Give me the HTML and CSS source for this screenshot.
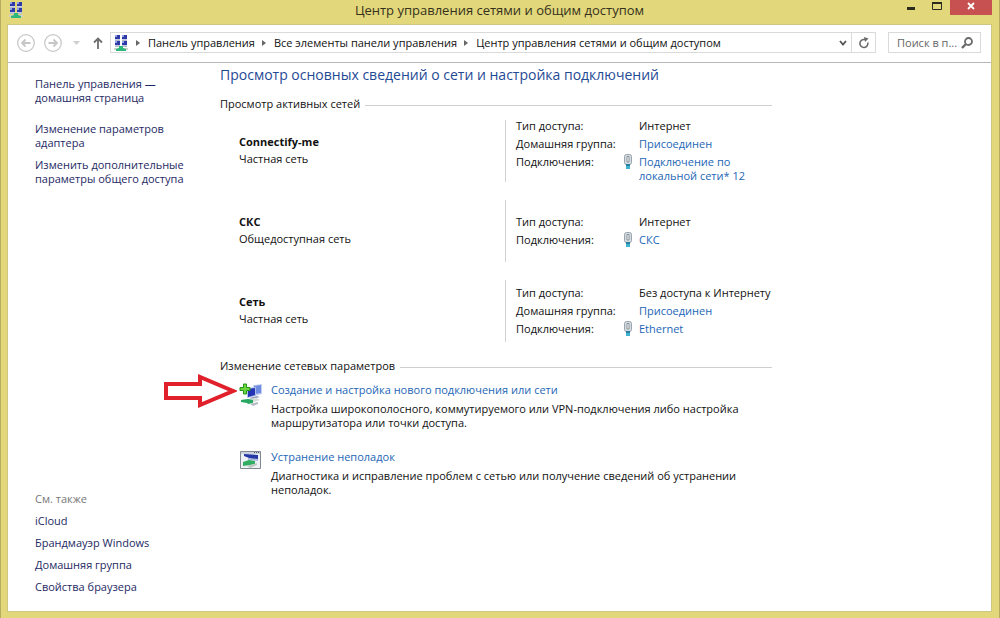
FILE: index.html
```
<!DOCTYPE html>
<html lang="ru">
<head>
    <meta charset="UTF-8">
    <meta name="viewport" content="width=device-width, initial-scale=1.0">
    <title>Центр управления сетями и общим доступом</title>
    <link rel="stylesheet" href="styles.css">
</head>
<body>
    <!-- shared icons -->
    <svg class="sprite" aria-hidden="true">
        <symbol id="icon-network" viewBox="0 0 16 16">
            <path d="M2 4h5v2H2zM9 4h5v2H9zM2 10h5v2H2zM9 10h5v2H9z" fill="#b3bccb"/>
            <path d="M2 0h5v5H2zM9 0h5v5H9zM2 6h5v5H2zM9 6h5v5H9z" fill="#c5cde4"/>
            <path d="M2 0h5v4H2zM9 0h5v4H9zM2 6h5v4H2zM9 6h5v4H9z" fill="#3039a8"/>
            <path d="M2 0h2v2H2zM9 0h2v2H9zM2 6h2v2H2zM9 6h2v2H9z" fill="#93a2e0"/>
            <path d="M1 13h14v2H1z" fill="#cdd3cf"/>
            <path d="M6 11h4v2l3 1v2H3v-2l3-1z" fill="#2db77a"/>
        </symbol>
        <symbol id="icon-plug" viewBox="0 0 10 16">
            <path d="M1.500 2.500q0-2 2-2h3q2 0 2 2v6q0 2-2 2h-3q-2 0-2-2z" fill="#d5dce2" stroke="#9aa4ac"/>
            <path d="M4 2.500h2v5.500H4z" fill="#fff" stroke="#86919a"/>
            <path d="M3 10h4v3H3z" fill="#27809f"/>
            <path d="M3 12h4v3H3z" fill="#3fb2cf"/>
        </symbol>
    </svg>

    <div class="window">
        <header class="titlebar">
            <svg class="titlebar-icon" width="16" height="16"><use href="#icon-network"/></svg>
            <h1 class="titlebar-text">Центр управления сетями и общим доступом</h1>
            <div class="window-buttons">
                <button class="win-btn" aria-label="Свернуть">
                    <svg width="12" height="12" viewBox="0 0 12 12"><path d="M2 7h8v3H2z" fill="#2b2a1c"/></svg>
                </button>
                <button class="win-btn" aria-label="Развернуть">
                    <svg width="12" height="12" viewBox="0 0 12 12"><path d="M1.500 2.500h9v7h-9z" fill="none" stroke="#2b2a1c"/><path d="M1 2h10v2H1z" fill="#2b2a1c"/></svg>
                </button>
                <button class="win-btn win-close" aria-label="Закрыть">
                    <svg width="12" height="12" viewBox="0 0 12 12"><path d="M3 3l6 6M9 3l-6 6" stroke="#fff" stroke-width="1.800"/></svg>
                </button>
            </div>
        </header>

        <div class="client">
            <nav class="toolbar">
                <button class="nav-btn nav-back" aria-label="Назад">
                    <svg width="18" height="18" viewBox="0 0 18 18" fill="none" stroke="#c6c6c6"><circle cx="9" cy="9" r="8.300" stroke-width="1.200"/><path d="M13.500 9H5M8.500 5.500L5 9l3.500 3.500" stroke-width="1.800"/></svg>
                </button>
                <button class="nav-btn nav-forward" aria-label="Вперёд">
                    <svg width="18" height="18" viewBox="0 0 18 18" fill="none" stroke="#c6c6c6"><circle cx="9" cy="9" r="8.300" stroke-width="1.200"/><path d="M4.500 9H13M9.500 5.500L13 9l-3.500 3.500" stroke-width="1.800"/></svg>
                </button>
                <button class="nav-btn nav-history" aria-label="Последние страницы">
                    <svg width="8" height="4" viewBox="0 0 8 4"><path d="M0 0h7L3.500 4z" fill="#cfcfcf"/></svg>
                </button>
                <button class="nav-btn nav-up" aria-label="Вверх">
                    <svg width="10" height="12" viewBox="0 0 10 12" fill="none" stroke="#6e6e6e" stroke-width="1.800"><path d="M5 12V2M1 5.500l4-4 4 4"/></svg>
                </button>
                <div class="address">
                    <svg class="address-icon" width="16" height="16"><use href="#icon-network"/></svg>
                    <span class="crumb-arrow"></span>
                    <a class="crumb" href="#">Панель управления</a>
                    <span class="crumb-arrow"></span>
                    <a class="crumb" href="#">Все элементы панели управления</a>
                    <span class="crumb-arrow"></span>
                    <a class="crumb" href="#">Центр управления сетями и общим доступом</a>
                    <button class="nav-btn address-drop" aria-label="Предыдущие расположения">
                        <svg width="8" height="6" viewBox="0 0 8 6"><path d="M1 1l3 3.500L7 1" fill="none" stroke="#555" stroke-width="1.800"/></svg>
                    </button>
                    <button class="nav-btn address-refresh" aria-label="Обновить">
                        <svg width="12" height="12" viewBox="0 0 12 12"><path d="M9.800 5.500A4 4 0 1 1 7 2.600" fill="none" stroke="#6a6a6a" stroke-width="1.600"/><path d="M6 0l4.500 1.500L7 5z" fill="#6a6a6a"/></svg>
                    </button>
                </div>
                <label class="search">
                    <input class="search-input" type="text" placeholder="Поиск в п..." aria-label="Поиск в панели управления">
                    <svg width="12" height="12" viewBox="0 0 12 12" fill="none" stroke="#6a6a6a"><circle cx="7.500" cy="4.500" r="3.500" stroke-width="1.800"/><path d="M5 7l-4 4" stroke-width="2.400"/></svg>
                </label>
            </nav>

            <div class="body">
                <aside class="sidebar">
                    <div class="tasks">
                        <a class="side-link" href="#">Панель управления —<br>домашняя страница</a>
                        <a class="side-link side-gap" href="#">Изменение параметров<br>адаптера</a>
                        <a class="side-link" href="#">Изменить дополнительные<br>параметры общего доступа</a>
                    </div>
                    <div class="see-also">
                        <span class="see-title">См. также</span>
                        <a class="side-link" href="#">iCloud</a>
                        <a class="side-link" href="#">Брандмауэр Windows</a>
                        <a class="side-link" href="#">Домашняя группа</a>
                        <a class="side-link" href="#">Свойства браузера</a>
                    </div>
                </aside>

                <main class="content">
                    <h2 class="page-title">Просмотр основных сведений о сети и настройка подключений</h2>

                    <section>
                        <h3 class="section-title">Просмотр активных сетей</h3>
                        <div class="networks">
                            <div class="network">
                                <div class="network-name">
                                    <strong>Connectify-me</strong>
                                    <span>Частная сеть</span>
                                </div>
                                <dl class="network-info">
                                    <dt>Тип доступа:</dt>
                                    <dd>Интернет</dd>
                                    <dt>Домашняя группа:</dt>
                                    <dd><a class="link" href="#">Присоединен</a></dd>
                                    <dt>Подключения:</dt>
                                    <dd class="with-plug"><svg class="plug" width="10" height="16"><use href="#icon-plug"/></svg><a class="link" href="#">Подключение по<br>локальной сети* 12</a></dd>
                                </dl>
                            </div>
                            <div class="network">
                                <div class="network-name">
                                    <strong>СКС</strong>
                                    <span>Общедоступная сеть</span>
                                </div>
                                <dl class="network-info">
                                    <dt>Тип доступа:</dt>
                                    <dd>Интернет</dd>
                                    <dt>Подключения:</dt>
                                    <dd class="with-plug"><svg class="plug" width="10" height="16"><use href="#icon-plug"/></svg><a class="link" href="#">СКС</a></dd>
                                </dl>
                            </div>
                            <div class="network">
                                <div class="network-name">
                                    <strong>Сеть</strong>
                                    <span>Частная сеть</span>
                                </div>
                                <dl class="network-info">
                                    <dt>Тип доступа:</dt>
                                    <dd>Без доступа к Интернету</dd>
                                    <dt>Домашняя группа:</dt>
                                    <dd><a class="link" href="#">Присоединен</a></dd>
                                    <dt>Подключения:</dt>
                                    <dd class="with-plug"><svg class="plug" width="10" height="16"><use href="#icon-plug"/></svg><a class="link" href="#">Ethernet</a></dd>
                                </dl>
                            </div>
                        </div>
                    </section>

                    <section>
                        <h3 class="section-title">Изменение сетевых параметров</h3>
                        <div class="actions">
                            <div class="action">
                                <svg class="pointer" width="74" height="34" viewBox="0 0 74 34"><path d="M3 10h34V3l33 14-33 14v-7H3z" fill="#fff" stroke="#e0202a" stroke-width="4"/></svg>
                                <svg class="action-icon" width="24" height="24" viewBox="0 0 24 24">
                                    <path d="M14 2l9-1v10l-7 2z" fill="#c3d1f2"/>
                                    <path d="M15 3l7-1v8l-6 1z" fill="#6f8be0"/>
                                    <path d="M8 5l9-1v9l-9 2z" fill="#aebfeb"/>
                                    <path d="M9 6l7-1v7l-7 2z" fill="#2233b3"/>
                                    <path d="M10 15l8-2 3 1-8 2z" fill="#9ea8ba"/>
                                    <path d="M2 17l16-2 3 2-9 3-10-1z" fill="#d5ddd9"/>
                                    <path d="M2 17l7-1 5 1v3l-5 1-1-1-6-1z" fill="#28a862"/>
                                    <path d="M11 21l8-2v2l-5 2z" fill="#b3bcc2"/>
                                    <path d="M4.500 1h3v3.500H11v3H7.500V11h-3V7.500H1v-3h3.500z" fill="#6bd640" stroke="#279619"/>
                                </svg>
                                <div>
                                    <a class="link" href="#">Создание и настройка нового подключения или сети</a>
                                    <p class="action-text">Настройка широкополосного, коммутируемого или VPN-подключения либо настройка маршрутизатора или точки доступа.</p>
                                </div>
                            </div>
                            <div class="action">
                                <svg class="action-icon" width="24" height="24" viewBox="0 0 24 24">
                                    <path d="M1.500 1.500h20v17h-20z" fill="#eef1f5" stroke="#82888f"/>
                                    <path d="M2 2h19v2H2z" fill="#cdd3dd"/>
                                    <path d="M15 2h1v1h-1zM17 2h1v1h-1zM19 2h1v1h-1z" fill="#4d5661"/>
                                    <path d="M5 4l14 1v4l-5 .5L5 6z" fill="#2637a6"/>
                                    <path d="M9 8l10 1v2l-10-1z" fill="#a9b7dd"/>
                                    <path d="M4 12l6-2 6 1v3l-5 1-7 1z" fill="#2fae62"/>
                                    <path d="M8 16l10-3v2l-7 3z" fill="#bcc7c2"/>
                                </svg>
                                <div>
                                    <a class="link" href="#">Устранение неполадок</a>
                                    <p class="action-text">Диагностика и исправление проблем с сетью или получение сведений об устранении неполадок.</p>
                                </div>
                            </div>
                        </div>
                    </section>
                </main>
            </div>
        </div>
    </div>
</body>
</html>
```
FILE: styles.css
```
* {
    box-sizing: border-box;
}
body {
    margin: 0;
    font-family: "Open Sans", "Noto Sans", sans-serif;
    font-size: 11px;
    line-height: 14px;
    color: #111;
}
h1, h2, h3, p, dl, dd {
    margin: 0;
    font-weight: normal;
}
a {
    color: inherit;
    text-decoration: none;
}
button {
    padding: 0;
    border: none;
    background: none;
}
svg {
    display: block;
    flex: none;
}
.sprite {
    position: absolute;
    width: 0;
    height: 0;
}
.window {
    display: flex;
    flex-direction: column;
    min-height: 100vh;
    padding: 0 7px 6px 6px;
    background-color: #e2d77b;
    border-left: 1px solid #b5ac62;
    border-right: 1px solid #b5ac62;
}

/* title bar */
.titlebar {
    display: grid;
    grid-template-columns: 1fr auto 1fr;
    height: 24px;
}
.titlebar-icon {
    margin: 2px 0 0 1px;
}
.titlebar-text {
    font-size: 13px;
    line-height: 21px;
    color: #35321b;
}
.window-buttons {
    display: flex;
    justify-content: flex-end;
    align-items: flex-start;
}
.win-btn {
    display: flex;
    justify-content: center;
    width: 26px;
    height: 15px;
}
.win-close {
    width: 42px;
    background-color: #c75050;
}

/* client area */
.client {
    flex: 1;
    display: flex;
    flex-direction: column;
    background-color: #fff;
    border: 1px solid #cfc682;
}
.toolbar {
    display: flex;
    align-items: center;
    height: 38px;
    padding: 0 10px 2px 9px;
    border-bottom: 1px solid #b4b8bb;
}
.nav-btn {
    display: flex;
    align-items: center;
    justify-content: center;
}
.nav-forward {
    margin-left: 9px;
}
.nav-history {
    margin-left: 11px;
}
.nav-up {
    margin-left: 12px;
}
.address {
    flex: 1;
    display: flex;
    align-items: center;
    height: 21px;
    margin: 0 12px 0 7px;
    border: 1px solid #dadada;
}
.address-icon {
    margin: 0 7px 0 2px;
}
.crumb-arrow {
    border: 3px solid transparent;
    border-left: 4px solid #666;
    border-right: none;
}
.crumb {
    margin: 0 7px 0 8px;
}
.address-drop {
    width: 16px;
    margin-left: auto;
}
.address-refresh {
    width: 24px;
    height: 19px;
    border-left: 1px solid #dadada;
}
.search {
    display: flex;
    align-items: center;
    width: 93px;
    height: 21px;
    padding: 0 7px 0 8px;
    border: 1px solid #dadada;
}
.search-input {
    flex: 1;
    min-width: 0;
    padding: 0;
    border: none;
    outline: none;
    font: inherit;
    color: #666;
}
.search-input::placeholder {
    color: #666;
}

.body {
    flex: 1;
    display: flex;
}

/* left column */
.sidebar {
    display: flex;
    flex-direction: column;
    justify-content: space-between;
    width: 185px;
    margin-left: 27px;
    padding: 14px 0 17px;
    color: #1e2a63;
}
.tasks {
    display: flex;
    flex-direction: column;
    gap: 8px;
}
.side-gap {
    margin-top: 9px;
}
.see-also {
    display: flex;
    flex-direction: column;
    gap: 8px;
}
.see-title {
    color: #777;
}

/* right column */
.content {
    flex: 1;
    max-width: 552px;
}
.page-title {
    margin-top: 2px;
    font-size: 14px;
    line-height: 20px;
    color: #1f4a94;
}
.section-title {
    display: flex;
    align-items: center;
    gap: 5px;
    margin-top: 12px;
    font-size: 11px;
}
.section-title::after {
    content: "";
    flex: 1;
    height: 1px;
    margin-top: 2px;
    background-color: #cfcfcf;
}
.link {
    color: #1d66b5;
}
.networks {
    display: grid;
    grid-auto-rows: 62px;
    gap: 18px;
    padding: 9px 0 5px 19px;
}
.network {
    display: flex;
}
.network-name {
    flex: 1;
    display: flex;
    flex-direction: column;
    gap: 3px;
    padding-top: 15px;
}
.network-info {
    display: grid;
    grid-template-columns: 123px 1fr;
    align-content: center;
    gap: 4px 0;
    width: 267px;
    padding-left: 10px;
    border-left: 1px solid #d2d2d2;
}
.with-plug {
    position: relative;
}
.plug {
    position: absolute;
    left: -16px;
    top: -1px;
}
.actions {
    display: flex;
    flex-direction: column;
    gap: 20px;
    padding: 10px 0 0 19px;
}
.action {
    position: relative;
    display: flex;
    gap: 8px;
}
.action-text {
    margin-top: 5px;
}
/* arrow that points at the first action */
.pointer {
    position: absolute;
    left: -76px;
    top: -9px;
}
```
